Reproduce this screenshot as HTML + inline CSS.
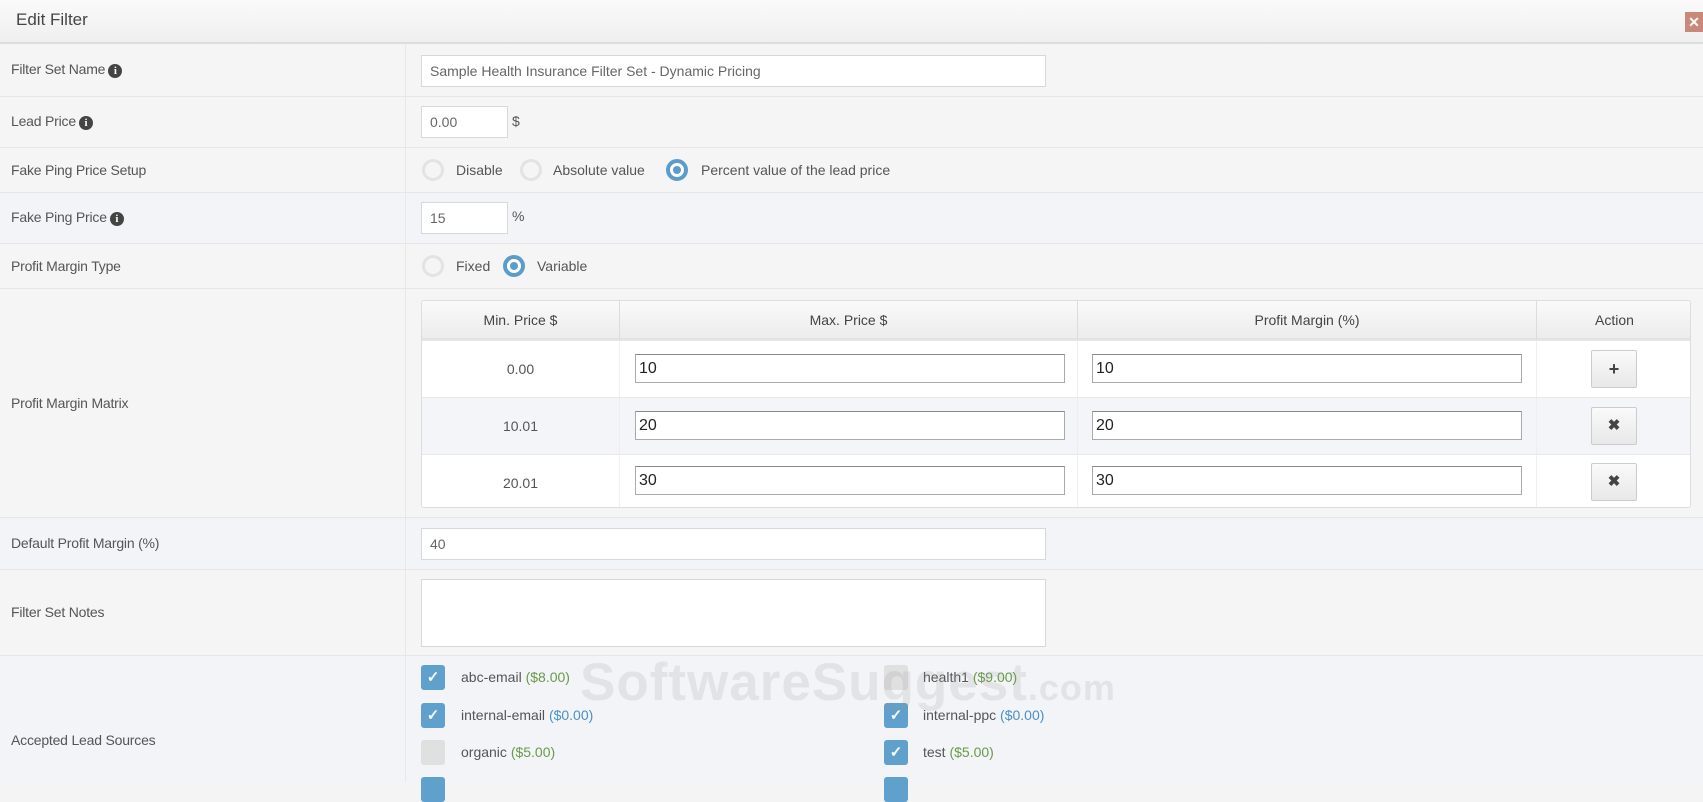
<!DOCTYPE html>
<html><head><style>
*{box-sizing:border-box;margin:0;padding:0}
body{width:1703px;height:782px;overflow:hidden;background:#f4f4f4;font-family:"Liberation Sans",sans-serif;font-size:14px;color:#555;position:relative}
.hdr{position:absolute;left:0;top:0;width:1703px;height:44px;background:linear-gradient(#fafafa,#efefef);border-bottom:2px solid #ddd}
.hdr span{position:absolute;left:16px;top:10px;font-size:17px;color:#444}
.close{position:absolute;right:0;top:12px;width:18px;height:20px;background:#c9897a;color:#fff;font-size:14px;text-align:center;line-height:20px;font-weight:bold}
.row{position:absolute;left:0;width:1703px;border-bottom:1px solid #e6e6e6}
.row .lab{position:absolute;left:11px;letter-spacing:-0.2px}
.sep{position:absolute;left:405px;top:44px;width:1px;height:738px;background:#e8e8e8}
.inp{position:absolute;background:#fff;border:1px solid #d8d8d8;padding-left:8px;color:#666;font-size:14px;display:flex;align-items:center}
.info{display:inline-block;width:14px;height:14px;border-radius:50%;background:#444;color:#fff;font-size:11px;font-weight:bold;text-align:center;line-height:14px;vertical-align:0px;margin-left:3px;font-family:"Liberation Serif",serif}
.rad{position:absolute;width:22px;height:22px;border-radius:50%;border:3px solid #e3e3e3;background:#f5f5f5}
.rad.on{border:4px solid #5a9dcb;background:#fff}
.rad.on:after{content:"";position:absolute;left:3px;top:3px;width:8px;height:8px;border-radius:50%;background:#5a9dcb}
.t{position:absolute;font-size:14px;color:#555}
.tbl{position:absolute;left:421px;top:300px;width:1270px;height:208px;border:1px solid #ddd;border-radius:3px;background:#fff;overflow:hidden}
.th{position:absolute;top:0;height:39px;background:linear-gradient(#fafafa,#ececec);border-bottom:2px solid #e2e2e2;border-right:1px solid #dcdcdc;text-align:center;line-height:39px;color:#444;font-size:14px}
.tr{position:absolute;left:0;width:1270px;border-top:1px solid #e8e8e8}
.cell{position:absolute;top:0;height:100%;border-right:1px solid #eee;display:flex;align-items:center;justify-content:center;color:#555}
.ti{position:absolute;height:29px;background:#fff;border:1px solid #aaa;border-top-color:#888;font-size:16px;color:#222;padding-left:3px;display:flex;align-items:center}
.btn{position:absolute;left:1169px;width:46px;height:38px;border:1px solid #ccc;border-radius:2px;background:linear-gradient(#fafafa,#e8e8e8);text-align:center;line-height:36px;font-weight:bold;color:#444;font-size:18px}
.cb{position:absolute;width:24px;height:25px;border-radius:3px;background:#5fa0cc;color:#fff;text-align:center;line-height:25px;font-size:15px;font-weight:bold}
.cb.off{background:#e0e0e0}
.g{color:#6a9a4a}.b{color:#4a90c8}
.wm{position:absolute;left:580px;top:652px;font-size:53px;font-weight:bold;color:rgba(150,150,150,.18);letter-spacing:1px}
</style></head><body>
<div class="hdr"><span>Edit Filter</span><div class="close">✕</div></div>

<div class="row" style="top:44px;height:53px;background:#f5f5f5"><span class="lab" style="top:17px">Filter Set Name<span class="info">i</span></span></div>
<div class="row" style="top:97px;height:51px;background:#f5f5f5"><span class="lab" style="top:16px">Lead Price<span class="info">i</span></span></div>
<div class="row" style="top:148px;height:45px;background:#f5f5f5"><span class="lab" style="top:14px">Fake Ping Price Setup</span></div>
<div class="row" style="top:193px;height:51px;background:#f2f4f7"><span class="lab" style="top:16px">Fake Ping Price<span class="info">i</span></span></div>
<div class="row" style="top:244px;height:45px;background:#f5f5f5"><span class="lab" style="top:14px">Profit Margin Type</span></div>
<div class="row" style="top:289px;height:229px;background:#f5f5f5"><span class="lab" style="top:106px">Profit Margin Matrix</span></div>
<div class="row" style="top:518px;height:52px;background:#f2f4f7"><span class="lab" style="top:17px">Default Profit Margin (%)</span></div>
<div class="row" style="top:570px;height:86px;background:#f5f5f5"><span class="lab" style="top:34px">Filter Set Notes</span></div>
<div class="row" style="top:656px;height:130px;background:#f2f4f7;border:0"><span class="lab" style="top:76px">Accepted Lead Sources</span></div>
<div class="sep"></div>

<div class="inp" style="left:421px;top:55px;width:625px;height:32px">Sample Health Insurance Filter Set - Dynamic Pricing</div>
<div class="inp" style="left:421px;top:106px;width:87px;height:32px">0.00</div><span class="t" style="left:512px;top:113px">$</span>
<div class="rad" style="left:422px;top:159px"></div><span class="t" style="left:456px;top:162px">Disable</span>
<div class="rad" style="left:520px;top:159px"></div><span class="t" style="left:553px;top:162px">Absolute value</span>
<div class="rad on" style="left:666px;top:159px"></div><span class="t" style="left:701px;top:162px">Percent value of the lead price</span>
<div class="inp" style="left:421px;top:202px;width:87px;height:32px">15</div><span class="t" style="left:512px;top:208px">%</span>
<div class="rad" style="left:422px;top:255px"></div><span class="t" style="left:456px;top:258px">Fixed</span>
<div class="rad on" style="left:503px;top:255px"></div><span class="t" style="left:537px;top:258px">Variable</span>

<div class="tbl">
<div class="th" style="left:0;width:198px">Min. Price $</div>
<div class="th" style="left:198px;width:458px">Max. Price $</div>
<div class="th" style="left:656px;width:459px">Profit Margin (%)</div>
<div class="th" style="left:1115px;width:155px;border-right:0">Action</div>
<div class="tr" style="top:39px;height:57px;background:#fff"><div class="cell" style="left:0;width:198px">0.00</div><div class="cell" style="left:198px;width:458px"></div><div class="cell" style="left:656px;width:459px"></div>
<div class="ti" style="left:213px;top:13px;width:430px">10</div><div class="ti" style="left:670px;top:13px;width:430px">10</div><div class="btn" style="top:9px">+</div></div>
<div class="tr" style="top:96px;height:57px;background:#f3f5f8"><div class="cell" style="left:0;width:198px">10.01</div><div class="cell" style="left:198px;width:458px"></div><div class="cell" style="left:656px;width:459px"></div>
<div class="ti" style="left:213px;top:13px;width:430px">20</div><div class="ti" style="left:670px;top:13px;width:430px">20</div><div class="btn" style="top:9px;font-size:15px">✖</div></div>
<div class="tr" style="top:153px;height:56px;background:#fff"><div class="cell" style="left:0;width:198px">20.01</div><div class="cell" style="left:198px;width:458px"></div><div class="cell" style="left:656px;width:459px"></div>
<div class="ti" style="left:213px;top:11px;width:430px">30</div><div class="ti" style="left:670px;top:11px;width:430px">30</div><div class="btn" style="top:8px;font-size:15px">✖</div></div>
</div>

<div class="inp" style="left:421px;top:528px;width:625px;height:32px">40</div>
<div class="inp" style="left:421px;top:579px;width:625px;height:68px"></div>

<div class="cb" style="left:421px;top:665px">✓</div><span class="t" style="left:461px;top:669px">abc-email <span class="g">($8.00)</span></span>
<div class="cb off" style="left:884px;top:665px"></div><span class="t" style="left:923px;top:669px">health1 <span class="g">($9.00)</span></span>
<div class="cb" style="left:421px;top:703px">✓</div><span class="t" style="left:461px;top:707px">internal-email <span class="b">($0.00)</span></span>
<div class="cb" style="left:884px;top:703px">✓</div><span class="t" style="left:923px;top:707px">internal-ppc <span class="b">($0.00)</span></span>
<div class="cb off" style="left:421px;top:740px"></div><span class="t" style="left:461px;top:744px">organic <span class="g">($5.00)</span></span>
<div class="cb" style="left:884px;top:740px">✓</div><span class="t" style="left:923px;top:744px">test <span class="g">($5.00)</span></span>
<div class="cb" style="left:421px;top:777px"></div><div class="cb" style="left:884px;top:777px"></div>
<div class="wm">SoftwareSuggest<span style="font-size:36px">.com</span></div>
</body></html>
